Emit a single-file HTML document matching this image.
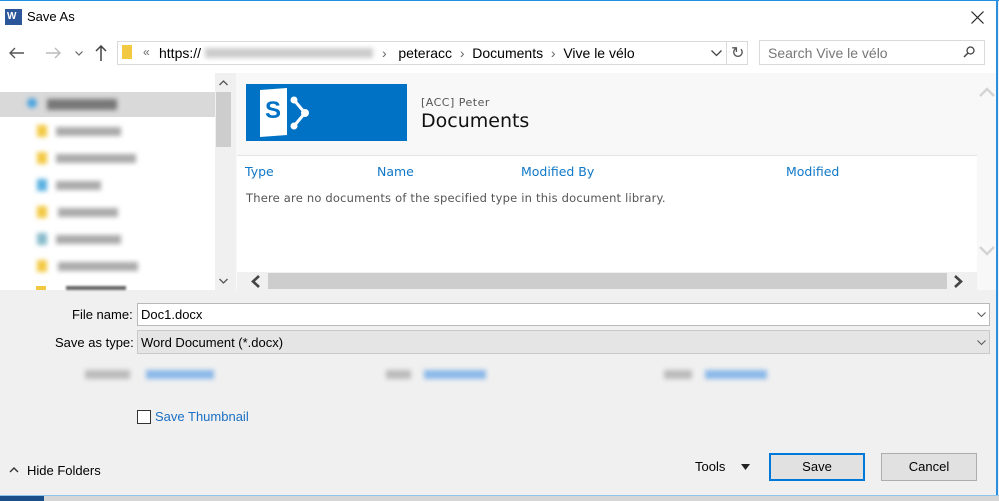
<!DOCTYPE html>
<html><head><meta charset="utf-8"><style>
*{margin:0;padding:0;box-sizing:border-box}
body{width:999px;height:501px;overflow:hidden;background:#f0f0f0;font-family:"Liberation Sans",sans-serif;font-size:13px;color:#000;position:relative}
.a{position:absolute}
.blur{filter:blur(2.5px)}
</style></head><body>
<div class="a" style="left:0;top:0;width:997px;height:73px;background:#fff"></div>
<div class="a" style="left:0;top:0;width:999px;height:1px;background:#1e90e6"></div>
<div class="a" style="left:996px;top:0;width:2px;height:496px;background:#2a8fe0"></div>
<!-- title -->
<div class="a" style="left:5px;top:9px;width:17px;height:16px;background:#2b579a;color:#fff;font-size:10px;font-weight:bold;line-height:16px;padding-left:2px">W</div>
<div class="a" style="left:27px;top:9px;font-size:13px">Save As</div>
<svg class="a" style="left:971px;top:11px" width="13" height="13"><path d="M0.5 0.5L12.5 12.5M12.5 0.5L0.5 12.5" stroke="#222" stroke-width="1.2"/></svg>
<!-- nav -->
<svg class="a" style="left:9px;top:47px" width="16" height="12"><path d="M1 6H15M6 1L1 6L6 11" stroke="#555" stroke-width="1.4" fill="none"/></svg>
<svg class="a" style="left:45px;top:47px" width="16" height="12"><path d="M1 6H15M10 1L15 6L10 11" stroke="#bbb" stroke-width="1.4" fill="none"/></svg>
<svg class="a" style="left:75px;top:51px" width="8" height="5"><path d="M0.5 0.5L4 4L7.5 0.5" stroke="#666" stroke-width="1.2" fill="none"/></svg>
<svg class="a" style="left:95px;top:45px" width="12" height="16"><path d="M6 16V1M1 6L6 1L11 6" stroke="#444" stroke-width="1.5" fill="none"/></svg>
<div class="a" style="left:117px;top:41px;width:631px;height:24px;border:1px solid #d9d9d9;background:#fff"></div>
<div class="a" style="left:122px;top:45px;width:10px;height:14px;background:#f3c944"></div>
<div class="a" style="left:143px;top:45px;font-size:12px;color:#666">«</div>
<div class="a" style="left:159px;top:45px;font-size:14px">https://</div>
<div class="a blur" style="left:205px;top:48px;width:168px;height:10px;background:#ccc"></div>
<div class="a" style="left:382px;top:45px;font-size:14px"><span style="color:#666">›</span>&nbsp;&nbsp; peteracc &nbsp;<span style="color:#666">›</span>&nbsp; Documents &nbsp;<span style="color:#666">›</span>&nbsp; Vive le vélo</div>
<svg class="a" style="left:711px;top:50px" width="11" height="7"><path d="M0.5 0.5L5.5 5.5L10.5 0.5" stroke="#444" stroke-width="1.3" fill="none"/></svg>
<div class="a" style="left:726px;top:41px;width:1px;height:24px;background:#d9d9d9"></div>
<div class="a" style="left:731px;top:43px;font-size:16px;color:#555">↻</div>
<div class="a" style="left:759px;top:40px;width:226px;height:25px;border:1px solid #d9d9d9;background:#fff"></div>
<div class="a" style="left:768px;top:45px;font-size:14px;color:#777">Search Vive le vélo</div>
<svg class="a" style="left:963px;top:46px" width="12" height="12"><circle cx="7.5" cy="4.5" r="3.5" stroke="#444" stroke-width="1.3" fill="none"/><path d="M5 7L1 11" stroke="#444" stroke-width="1.5"/></svg>
<!-- left pane -->
<div class="a" style="left:0;top:73px;width:232px;height:217px;background:#fff"></div>
<div class="a" style="left:0;top:92px;width:215px;height:25px;background:#d9d9d9"></div>
<div class="a" style="left:215px;top:73px;width:17px;height:217px;background:#f0f0f0"></div>
<svg class="a" style="left:219px;top:80px" width="9" height="6"><path d="M0.5 5L4.5 1L8.5 5" stroke="#555" stroke-width="1.3" fill="none"/></svg>
<div class="a" style="left:216px;top:92px;width:15px;height:55px;background:#cdcdcd"></div>
<svg class="a" style="left:219px;top:278px" width="9" height="6"><path d="M0.5 1L4.5 5L8.5 1" stroke="#555" stroke-width="1.3" fill="none"/></svg>
<div class="blur">
<div class="a" style="left:27px;top:98px;width:10px;height:10px;border-radius:5px;background:#4aa3e0"></div>
<div class="a" style="left:47px;top:99px;width:70px;height:11px;background:#777"></div>
<div class="a" style="left:37px;top:125px;width:10px;height:12px;background:#f3c944"></div><div class="a" style="left:56px;top:127px;width:65px;height:9px;background:#aaa"></div>
<div class="a" style="left:37px;top:152px;width:10px;height:12px;background:#f3c944"></div><div class="a" style="left:56px;top:154px;width:80px;height:9px;background:#aaa"></div>
<div class="a" style="left:37px;top:179px;width:10px;height:12px;background:#5ab0e0"></div><div class="a" style="left:56px;top:181px;width:45px;height:9px;background:#aaa"></div>
<div class="a" style="left:37px;top:206px;width:10px;height:12px;background:#f3c944"></div><div class="a" style="left:58px;top:208px;width:60px;height:9px;background:#aaa"></div>
<div class="a" style="left:37px;top:233px;width:10px;height:12px;background:#8bc"></div><div class="a" style="left:56px;top:235px;width:65px;height:9px;background:#aaa"></div>
<div class="a" style="left:37px;top:260px;width:10px;height:12px;background:#f3c944"></div><div class="a" style="left:58px;top:262px;width:80px;height:9px;background:#aaa"></div>
</div>
<div class="a" style="left:36px;top:286px;width:10px;height:4px;background:#f3c944"></div>
<div class="a" style="left:66px;top:286px;width:60px;height:4px;background:#666;filter:blur(1px)"></div>
<!-- content pane -->
<div class="a" style="left:236px;top:73px;width:760px;height:217px;background:#f8f8f8"></div>
<div class="a" style="left:246px;top:84px;width:161px;height:57px;background:#0072c6"></div>
<div class="a" style="left:260px;top:89px;width:27px;height:47px;background:#fff;transform:skewY(-4deg)"></div>
<div class="a" style="left:265px;top:97px;font-size:24px;font-weight:bold;color:#0072c6">S</div>
<svg class="a" style="left:289px;top:96px" width="22" height="34"><circle cx="5" cy="4" r="3.5" fill="#fff"/><circle cx="16" cy="17" r="4" fill="#fff"/><circle cx="5" cy="30" r="3.5" fill="#fff"/><path d="M5 4L16 17L5 30" stroke="#fff" stroke-width="3" fill="none"/></svg>
<div class="a" style="left:421px;top:96px;font-family:'DejaVu Sans',sans-serif;font-size:11px;color:#555;letter-spacing:.5px">[ACC] Peter</div>
<div class="a" style="left:421px;top:110px;font-family:'DejaVu Sans',sans-serif;font-size:19px;color:#111">Documents</div>
<div class="a" style="left:237px;top:155px;width:740px;height:117px;background:#fff;border-top:1px solid #e4e4e4"></div>
<div class="a" style="left:245px;top:164px;font-family:'DejaVu Sans',sans-serif;font-size:12.5px;color:#0f78c8">Type</div>
<div class="a" style="left:377px;top:164px;font-family:'DejaVu Sans',sans-serif;font-size:12.5px;color:#0f78c8">Name</div>
<div class="a" style="left:521px;top:164px;font-family:'DejaVu Sans',sans-serif;font-size:12.5px;color:#0f78c8">Modified By</div>
<div class="a" style="left:786px;top:164px;font-family:'DejaVu Sans',sans-serif;font-size:12.5px;color:#0f78c8">Modified</div>
<div class="a" style="left:246px;top:191px;font-family:'DejaVu Sans',sans-serif;font-size:11.5px;color:#555;letter-spacing:.2px">There are no documents of the specified type in this document library.</div>
<svg class="a" style="left:979px;top:87px" width="16" height="10"><path d="M1 9L8 2L15 9" stroke="#d4d4d4" stroke-width="2.5" fill="none"/></svg>
<svg class="a" style="left:979px;top:246px" width="16" height="10"><path d="M1 1L8 8L15 1" stroke="#d4d4d4" stroke-width="2.5" fill="none"/></svg>
<div class="a" style="left:237px;top:272px;width:740px;height:18px;background:#f0f0f0"></div>
<svg class="a" style="left:251px;top:275px" width="10" height="13"><path d="M8 1L2 6.5L8 12" stroke="#444" stroke-width="2.6" fill="none"/></svg>
<div class="a" style="left:268px;top:273px;width:679px;height:16px;background:#cdcdcd"></div>
<svg class="a" style="left:953px;top:275px" width="10" height="13"><path d="M2 1L8 6.5L2 12" stroke="#444" stroke-width="2.6" fill="none"/></svg>
<!-- bottom form -->
<div class="a" style="left:72px;top:307px;font-size:13px">File name:</div>
<div class="a" style="left:137px;top:303px;width:853px;height:23px;border:1px solid #b9b9b9;background:#fff"></div>
<div class="a" style="left:141px;top:307px;font-size:13px">Doc1.docx</div>
<svg class="a" style="left:977px;top:312px" width="9" height="5"><path d="M0.5 0.5L4.5 4.5L8.5 0.5" stroke="#555" stroke-width="1" fill="none"/></svg>
<div class="a" style="left:55px;top:335px;font-size:13px">Save as type:</div>
<div class="a" style="left:137px;top:330px;width:853px;height:24px;border:1px solid #c9c9c9;background:#e5e5e5"></div>
<div class="a" style="left:141px;top:335px;font-size:13px">Word Document (*.docx)</div>
<svg class="a" style="left:977px;top:340px" width="9" height="5"><path d="M0.5 0.5L4.5 4.5L8.5 0.5" stroke="#555" stroke-width="1" fill="none"/></svg>
<div class="blur">
<div class="a" style="left:85px;top:370px;width:45px;height:9px;background:#bbb"></div><div class="a" style="left:146px;top:370px;width:68px;height:9px;background:#8ab8e8"></div>
<div class="a" style="left:386px;top:370px;width:25px;height:9px;background:#bbb"></div><div class="a" style="left:424px;top:370px;width:62px;height:9px;background:#8ab8e8"></div>
<div class="a" style="left:664px;top:370px;width:28px;height:9px;background:#bbb"></div><div class="a" style="left:705px;top:370px;width:62px;height:9px;background:#8ab8e8"></div>
</div>
<div class="a" style="left:137px;top:410px;width:14px;height:14px;border:1px solid #333;background:#fff"></div>
<div class="a" style="left:155px;top:409px;font-size:13px;color:#1a6fc4">Save Thumbnail</div>
<svg class="a" style="left:9px;top:467px" width="10" height="6"><path d="M1 5L5 1L9 5" stroke="#333" stroke-width="1.4" fill="none"/></svg>
<div class="a" style="left:27px;top:463px;font-size:13px">Hide Folders</div>
<div class="a" style="left:695px;top:459px;font-size:13px">Tools</div>
<svg class="a" style="left:741px;top:464px" width="9" height="6"><path d="M0 0H9L4.5 6Z" fill="#222"/></svg>
<div class="a" style="left:769px;top:453px;width:96px;height:28px;border:2px solid #0078d7;background:#e1e1e1;text-align:center;line-height:24px;font-size:13px">Save</div>
<div class="a" style="left:881px;top:453px;width:96px;height:28px;border:1px solid #adadad;background:#e1e1e1;text-align:center;line-height:26px;font-size:13px">Cancel</div>
<div class="a" style="left:0;top:495px;width:999px;height:1px;background:#8cc4ec"></div>
<div class="a" style="left:0;top:496px;width:999px;height:5px;background:#d6d6d6"></div>
<div class="a" style="left:0;top:496px;width:44px;height:5px;background:#1b4f8a"></div>
</body></html>
